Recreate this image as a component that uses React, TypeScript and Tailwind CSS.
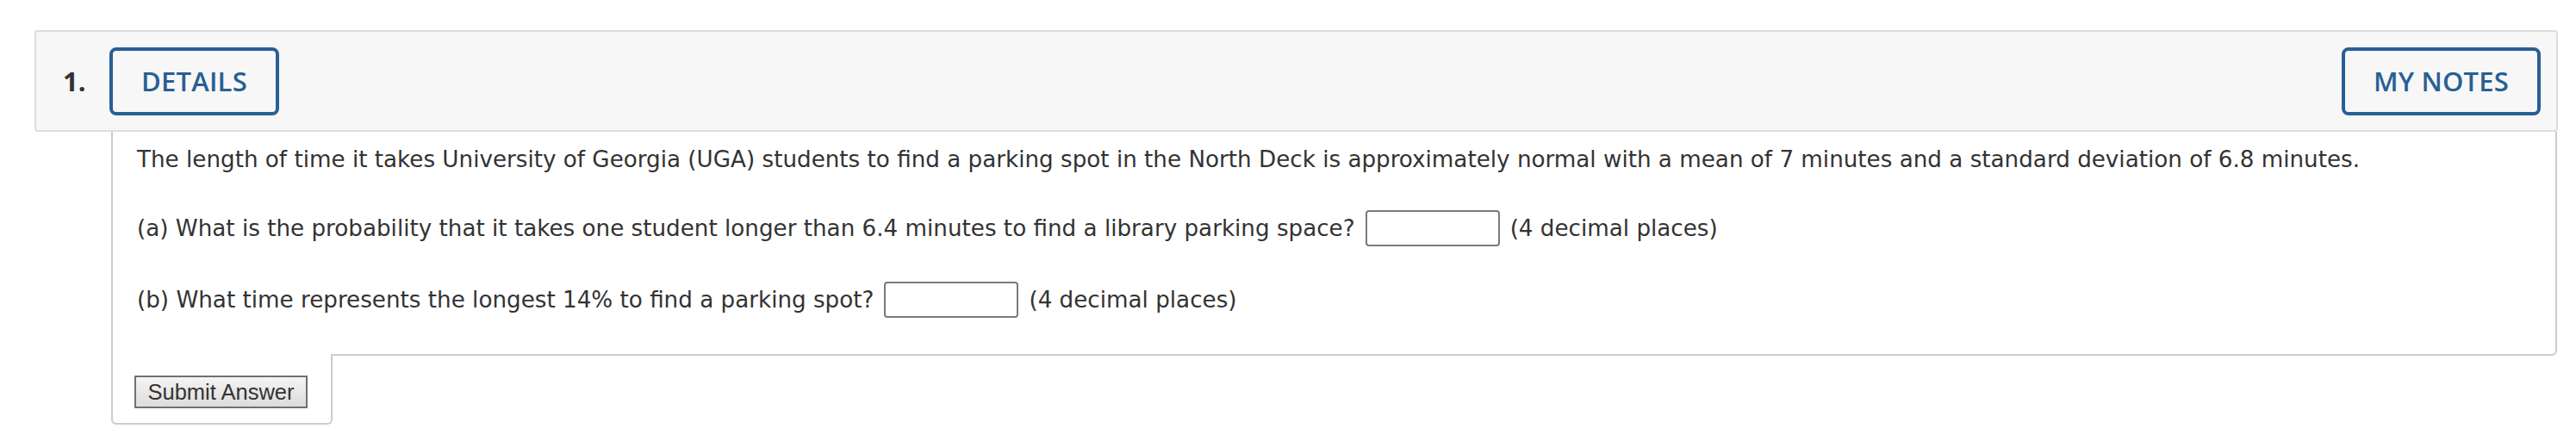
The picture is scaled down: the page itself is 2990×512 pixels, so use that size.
import React from "react";

function HeaderButton({ label, className }: { label: string; className?: string }) {
  return (
    <button
      type="button"
      className={
        "flex h-[79px] items-center justify-center rounded-[8px] border-[4px] border-[#285f94] bg-transparent text-[31px] font-semibold tracking-[0.2px] text-[#285f94] " +
        (className ?? "")
      }
    >
      {label}
    </button>
  );
}

function AnswerBox() {
  return (
    <input
      type="text"
      className="mx-[12px] h-[42px] w-[156px] rounded-[4px] border-2 border-[#7a7a7a] bg-white outline-none"
    />
  );
}

export default function App() {
  return (
    <div className="h-[512px] w-[2990px] bg-white pl-[40px] pt-[35px] text-[#333333]">
      {/* question header */}
      <div
        className="flex h-[118px] w-[2929px] items-center rounded-[4px] border-2 border-[#dddddd] bg-[#f7f7f7] pl-[31px] pr-[18px]"
        style={{ fontFamily: '"Open Sans", "Liberation Sans", sans-serif' }}
      >
        <span className="w-[54px] text-[31px] font-bold text-[#333333]">1.</span>
        <HeaderButton label="DETAILS" className="w-[197px]" />
        <div className="flex-1" />
        <HeaderButton label="MY NOTES" className="w-[231px]" />
      </div>

      {/* question body */}
      <div
        className="ml-[89px] w-[2839px] rounded-br-[6px] border-x-2 border-b-2 border-[#cccccc] pb-[42px] pl-[28px] pt-[13px] text-[26.2px] leading-[38px]"
        style={{ fontFamily: '"DejaVu Sans", Verdana, sans-serif' }}
      >
        <p className="h-[38px] whitespace-nowrap">
          The length of time it takes University of Georgia (UGA) students to find a parking spot in the North Deck is
          approximately normal with a mean of 7 minutes and a standard deviation of 6.8 minutes.
        </p>
        <div className="mt-[40px] flex h-[42px] items-center whitespace-nowrap">
          <span>
            (a) What is the probability that it takes one student longer than 6.4 minutes to find a library parking space?
          </span>
          <AnswerBox />
          <span>(4 decimal places)</span>
        </div>
        <div className="mt-[41px] flex h-[42px] items-center whitespace-nowrap">
          <span>(b) What time represents the longest 14% to find a parking spot?</span>
          <AnswerBox />
          <span>(4 decimal places)</span>
        </div>
      </div>

      {/* submit tab */}
      <div className="relative -mt-[2px] ml-[89px] w-[257px] rounded-b-[6px] border-x-2 border-b-2 border-[#cccccc] bg-white pb-[17px] pl-[25px] pt-[25px]">
        <button
          type="button"
          className="flex h-[38px] w-[201px] items-center justify-center border-2 border-[#707070] bg-gradient-to-b from-[#f4f4f4] to-[#dcdcdc] text-[25.5px] text-[#333333]"
          style={{ fontFamily: '"Liberation Sans", Arial, sans-serif' }}
        >
          Submit Answer
        </button>
      </div>
    </div>
  );
}
